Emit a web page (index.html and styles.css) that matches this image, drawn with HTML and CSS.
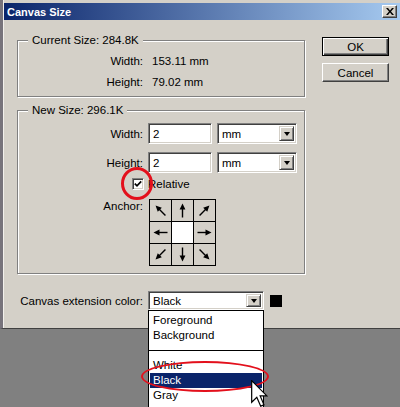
FILE: index.html
```html
<!DOCTYPE html>
<html>
<head>
<meta charset="utf-8">
<link rel="stylesheet" href="styles.css">
</head>
<body>
<div class="window">
  <div class="titlebar">
    <span class="title">Canvas Size</span>
    <span class="close"><svg width="8" height="7" viewBox="0 0 8 7"><path d="M0 0h2l2 2.4L6 0h2L5 3.5 8 7H6L4 4.6 2 7H0l3-3.5z" fill="#000"/></svg></span>
  </div>
  <div class="content">
    <div class="main">
      <fieldset class="group current">
        <legend>Current Size: 284.8K</legend>
        <div class="info"><span class="lbl">Width:</span><span class="val">153.11 mm</span></div>
        <div class="info"><span class="lbl">Height:</span><span class="val">79.02 mm</span></div>
      </fieldset>
      <fieldset class="group newsize">
        <legend>New Size: 296.1K</legend>
        <div class="row r-first">
          <span class="lbl">Width:</span>
          <div class="field">2</div>
          <div class="select unit"><span class="sel-text">mm</span><span class="dd"><i></i></span></div>
        </div>
        <div class="row r-next">
          <span class="lbl">Height:</span>
          <div class="field">2</div>
          <div class="select unit"><span class="sel-text">mm</span><span class="dd"><i></i></span></div>
        </div>
        <div class="row r-rel">
          <span class="lbl"><span class="check"><svg width="8" height="8" viewBox="0 0 8 8"><path d="M0.8 3.6 L3 5.8 L7.2 1.4" fill="none" stroke="#000" stroke-width="1.7"/></svg></span></span>
          <span>Relative</span>
        </div>
        <div class="row r-anchor">
          <span class="lbl">Anchor:</span>
          <div class="anchor">
            <div class="cell"><svg class="a-nw" viewBox="0 0 21 21"><path d="M3.5 10.5H13" stroke="#000" stroke-width="1.4"/><path d="M11.5 7.6L17.5 10.5 11.5 13.4z" fill="#000"/></svg></div>
            <div class="cell"><svg class="a-n" viewBox="0 0 21 21"><path d="M3.5 10.5H13" stroke="#000" stroke-width="1.4"/><path d="M11.5 7.6L17.5 10.5 11.5 13.4z" fill="#000"/></svg></div>
            <div class="cell"><svg class="a-ne" viewBox="0 0 21 21"><path d="M3.5 10.5H13" stroke="#000" stroke-width="1.4"/><path d="M11.5 7.6L17.5 10.5 11.5 13.4z" fill="#000"/></svg></div>
            <div class="cell"><svg class="a-w" viewBox="0 0 21 21"><path d="M3.5 10.5H13" stroke="#000" stroke-width="1.4"/><path d="M11.5 7.6L17.5 10.5 11.5 13.4z" fill="#000"/></svg></div>
            <div class="cell center"></div>
            <div class="cell"><svg class="a-e" viewBox="0 0 21 21"><path d="M3.5 10.5H13" stroke="#000" stroke-width="1.4"/><path d="M11.5 7.6L17.5 10.5 11.5 13.4z" fill="#000"/></svg></div>
            <div class="cell"><svg class="a-sw" viewBox="0 0 21 21"><path d="M3.5 10.5H13" stroke="#000" stroke-width="1.4"/><path d="M11.5 7.6L17.5 10.5 11.5 13.4z" fill="#000"/></svg></div>
            <div class="cell"><svg class="a-s" viewBox="0 0 21 21"><path d="M3.5 10.5H13" stroke="#000" stroke-width="1.4"/><path d="M11.5 7.6L17.5 10.5 11.5 13.4z" fill="#000"/></svg></div>
            <div class="cell"><svg class="a-se" viewBox="0 0 21 21"><path d="M3.5 10.5H13" stroke="#000" stroke-width="1.4"/><path d="M11.5 7.6L17.5 10.5 11.5 13.4z" fill="#000"/></svg></div>
          </div>
        </div>
      </fieldset>
      <div class="ext">
        <span class="ext-lbl">Canvas extension color:</span>
        <div class="select ext-sel"><span class="sel-text">Black</span><span class="dd"><i></i></span></div>
        <span class="swatch"></span>
      </div>
    </div>
    <div class="buttons">
      <div class="btn default">OK</div>
      <div class="btn">Cancel</div>
    </div>
  </div>
</div>

<div class="dropdown">
  <div class="item">Foreground</div>
  <div class="item">Background</div>
  <div class="sep"><span></span></div>
  <div class="item">White</div>
  <div class="item selected">Black</div>
  <div class="item">Gray</div>
</div>

<div class="ring ring-check"></div>
<div class="ring ring-black"></div>

<svg class="cursor" width="17" height="27" viewBox="0 0 12.6 20">
  <path d="M0.5 0.5 L0.5 16.5 L4.3 12.8 L7.2 19.4 L9.6 18.4 L6.8 11.8 L11.8 11.8 Z" fill="#fff" stroke="#000" stroke-width="0.9" stroke-linejoin="miter"/>
</svg>
</body>
</html>
```

FILE: styles.css
```css
html, body {
  margin: 0;
  padding: 0;
}
body {
  position: relative;
  width: 400px;
  height: 407px;
  overflow: hidden;
  background: #808080;
  font-family: "Liberation Sans", Arial, sans-serif;
  font-size: 11.5px;
  color: #000;
}

.window {
  width: 400px;
  box-sizing: border-box;
  background: #d4d0c8;
  border-left: 3px solid #77737b;
  border-bottom: 1px solid #404040;
  padding: 3px 0 0 1px;
  box-shadow: inset 1px 0 0 #f2f0ec;
}

.titlebar {
  height: 17px;
  display: flex;
  align-items: center;
  background: linear-gradient(to right, #0a246a 0%, #a6caf0 100%);
}
.title {
  color: #fff;
  font-weight: bold;
  font-size: 11px;
  padding-left: 3px;
}
.close {
  margin-left: auto;
  margin-right: 3px;
  width: 15px;
  height: 13px;
  box-sizing: border-box;
  background: #d4d0c8;
  border: 1px solid;
  border-color: #fff #404040 #404040 #fff;
  box-shadow: inset -1px -1px 0 #808080;
  display: flex;
  align-items: center;
  justify-content: center;
}
.close svg { display: block; }

.content {
  display: flex;
  padding: 13px 0 0 13px;
}
.main {
  width: 288px;
}

.group {
  margin: 0;
  padding: 0;
  width: 288px;
  box-sizing: border-box;
  border: 1px solid #808080;
  box-shadow: inset 1px 1px 0 #fff, 1px 1px 0 #fff;
  min-width: 0;
}
.group legend {
  margin-left: 10px;
  padding: 0 4px;
  line-height: 14px;
  background: #d4d0c8;
}
.current {
  padding: 3px 0 4px 0;
}
.info {
  display: flex;
  align-items: center;
  height: 21px;
}
.lbl {
  width: 125px;
  flex: none;
  text-align: right;
}
.val {
  margin-left: 9px;
}

.newsize {
  margin-top: 6px;
  padding: 6px 0 7px 0;
}
.row {
  display: flex;
  align-items: center;
  gap: 5px;
}
.r-first, .r-next { height: 21px; }
.r-next { margin-top: 8px; }
.r-rel { margin-top: 3px; height: 15px; }
.r-rel .lbl {
  display: flex;
  justify-content: flex-end;
}
.r-anchor {
  margin-top: 8px;
  align-items: flex-start;
}
.r-anchor .lbl {
  line-height: 14px;
}

.field {
  width: 64px;
  height: 21px;
  box-sizing: border-box;
  background: #fff;
  border: 1px solid;
  border-color: #808080 #fff #fff #808080;
  box-shadow: inset 1px 1px 0 #404040, inset -1px -1px 0 #d4d0c8;
  padding-left: 4px;
  display: flex;
  align-items: center;
}

.select {
  box-sizing: border-box;
  background: #fff;
  border: 1px solid;
  border-color: #808080 #fff #fff #808080;
  box-shadow: inset 1px 1px 0 #404040, inset -1px -1px 0 #d4d0c8;
  display: flex;
  align-items: center;
  padding: 2px 2px 2px 0;
}
.unit {
  width: 80px;
  height: 21px;
}
.sel-text {
  flex: 1;
  padding-left: 4px;
}
.dd {
  width: 15px;
  align-self: stretch;
  box-sizing: border-box;
  background: #d4d0c8;
  border: 1px solid;
  border-color: #d4d0c8 #404040 #404040 #d4d0c8;
  box-shadow: inset 1px 1px 0 #fff, inset -1px -1px 0 #808080;
  display: flex;
  align-items: center;
  justify-content: center;
}
.dd i {
  display: block;
  width: 0;
  height: 0;
  border-left: 3.5px solid transparent;
  border-right: 3.5px solid transparent;
  border-top: 4px solid #000;
}

.check {
  width: 12px;
  height: 12px;
  box-sizing: border-box;
  margin-right: -1px;
  background: #fff;
  border: 1px solid;
  border-color: #808080 #fff #fff #808080;
  box-shadow: inset 1px 1px 0 #404040, inset -1px -1px 0 #d4d0c8;
  display: flex;
  align-items: center;
  justify-content: center;
}
.check svg { display: block; }

.anchor {
  margin-left: 1px;
  display: grid;
  grid-template-columns: repeat(3, 21px);
  grid-template-rows: repeat(3, 21px);
  gap: 1px;
  background: #000;
  border: 1px solid #000;
}
.cell {
  background: #d4d0c8;
}
.cell.center {
  background: #fff;
}
.cell svg {
  display: block;
  width: 21px;
  height: 21px;
}
.a-e { transform: rotate(0deg); }
.a-w { transform: rotate(180deg); }
.a-n { transform: rotate(-90deg); }
.a-s { transform: rotate(90deg); }
.a-ne { transform: rotate(-45deg); }
.a-nw { transform: rotate(-135deg); }
.a-se { transform: rotate(45deg); }
.a-sw { transform: rotate(135deg); }

.ext {
  display: flex;
  align-items: center;
  margin-top: 17px;
  padding-bottom: 18px;
}
.ext-lbl {
  width: 126px;
  flex: none;
  text-align: right;
  padding-right: 5px;
}
.ext-sel {
  width: 116px;
  height: 19px;
}
.swatch {
  width: 12px;
  height: 12px;
  margin-left: 6px;
  background: #000;
}

.buttons {
  margin-left: 17px;
  margin-top: 4px;
  display: flex;
  flex-direction: column;
  gap: 7px;
}
.btn {
  width: 67px;
  height: 19px;
  box-sizing: border-box;
  border: 1px solid;
  border-color: #fff #404040 #404040 #fff;
  box-shadow: inset -1px -1px 0 #808080;
  display: flex;
  align-items: center;
  justify-content: center;
}
.btn.default {
  border: 1px solid #000;
  box-shadow: inset 1px 1px 0 #fff, inset -1px -1px 0 #404040, inset -2px -2px 0 #808080;
}

.dropdown {
  position: absolute;
  left: 148px;
  top: 310px;
  width: 116px;
  height: 110px;
  box-sizing: border-box;
  border: 1px solid #000;
  background: #fff;
  padding-top: 2px;
}
.item {
  line-height: 15px;
  height: 15px;
  padding-left: 4px;
}
.item.selected {
  margin: 0 1px;
  padding-left: 3px;
  background: #0a246a;
  color: #fff;
}
.sep {
  height: 15px;
  display: flex;
  align-items: center;
}
.sep span {
  display: block;
  width: 100%;
  height: 1px;
  background: #000;
}

.ring {
  position: absolute;
  box-sizing: border-box;
  border: 3px solid #e3101c;
  border-radius: 50%;
}
.ring-check {
  left: 121px;
  top: 167px;
  width: 32px;
  height: 33px;
}
.ring-black {
  left: 141px;
  top: 361px;
  width: 128px;
  height: 31px;
  border-width: 2.5px;
}

.cursor {
  position: absolute;
  left: 251px;
  top: 380px;
}
```
